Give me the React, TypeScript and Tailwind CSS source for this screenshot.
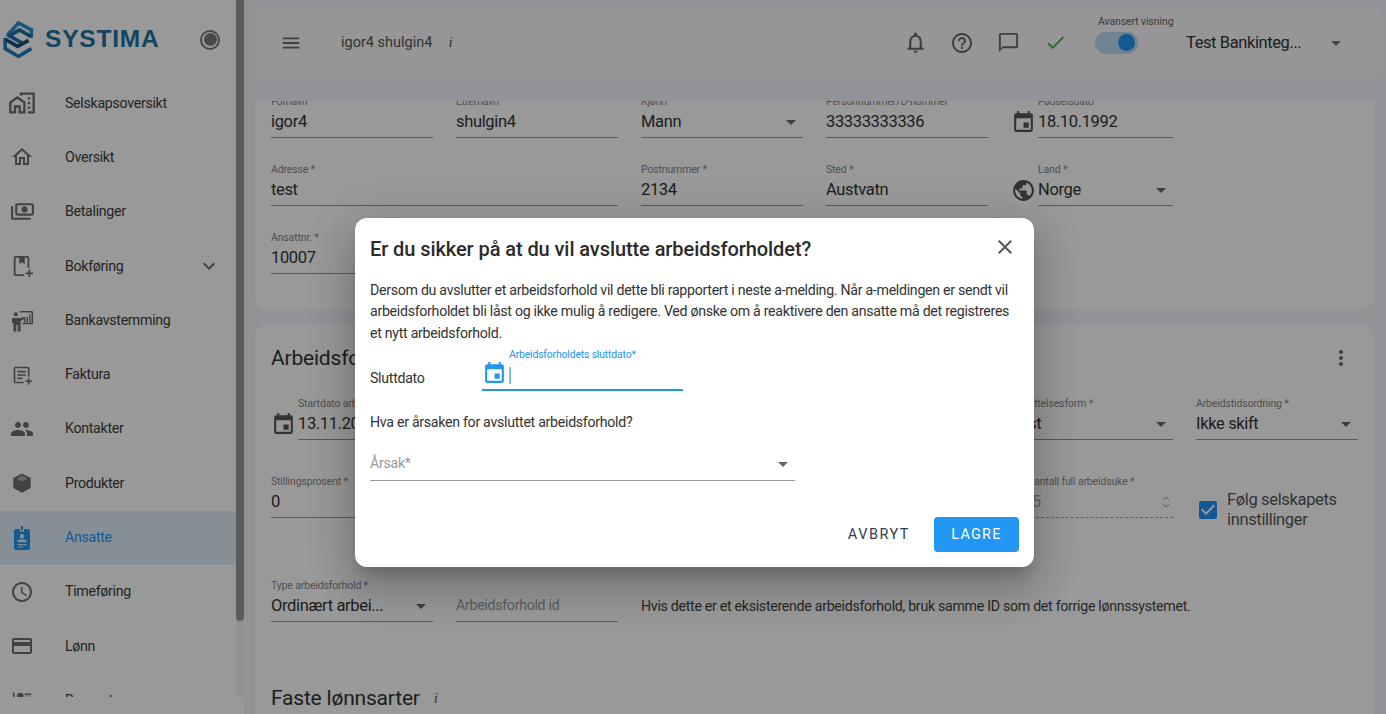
import React from 'react';
import {
  MdOutlineMapsHomeWork,
  MdOutlineHome,
  MdOutlinePayments,
  MdPeople,
  MdOutlineAccessTime,
  MdOutlineCreditCard,
  MdKeyboardArrowDown,
  MdMenu,
  MdOutlineNotifications,
  MdHelpOutline,
  MdChatBubbleOutline,
  MdCheck,
  MdArrowDropDown,
  MdClose,
  MdMoreVert,
  MdCheckBox,
  MdPublic,
} from 'react-icons/md';

const CalendarIcon = ({ className }: { className?: string }) => (
  <svg viewBox="0 0 24 24" fill="currentColor" className={className}>
    <path d="M17 12h-5v5h5v-5zM16 1v2H8V1H6v2H5c-1.11 0-1.99.9-1.99 2L3 19c0 1.1.89 2 2 2h14c1.1 0 2-.9 2-2V5c0-1.1-.9-2-2-2h-1V1h-2zm3 18H5V8h14v11z" />
  </svg>
);

const BookIcon = ({ className }: { className?: string }) => (
  <svg viewBox="0 0 24 24" fill="currentColor" className={className}>
    <path d="M5 1h13a2 2 0 0 1 2 2v11h-2V3h-3v7l-3-2-3 2V3H5v18h9v2H5a2 2 0 0 1-2-2V3a2 2 0 0 1 2-2z" />
    <path d="M19 16h2v3h3v2h-3v3h-2v-3h-3v-2h3z" />
  </svg>
);

const PresenterIcon = ({ className }: { className?: string }) => (
  <svg viewBox="0 0 24 24" fill="currentColor" className={className}>
    <circle cx="5" cy="5.5" r="2.2" />
    <path d="M1 9.5h9l5-1.5v2l-5 2.5v11H7v-7H5.6v7H2.6v-9H1z" />
    <path d="M9 2h12.5A1.5 1.5 0 0 1 23 3.5v11a1.5 1.5 0 0 1-1.5 1.5H12v-1.6h9.4V3.6H9z" />
    <path d="M13.5 10.5H15V14h-1.5zM16.2 8H17.7v6h-1.5zM18.9 5.5h1.4V14h-1.4z" />
  </svg>
);

const InvoiceIcon = ({ className }: { className?: string }) => (
  <svg viewBox="0 0 24 24" fill="currentColor" className={className}>
    <path d="M4 2h15a2 2 0 0 1 2 2v10h-2V4H4v16h10v2H4a2 2 0 0 1-2-2V4a2 2 0 0 1 2-2z" />
    <path d="M6.5 7h10v2h-10zM6.5 11h10v2h-10zM6.5 15h6v2h-6z" />
    <path d="M19 15.5h2v3h3v2h-3v3h-2v-3h-3v-2h3z" />
  </svg>
);

const BoxIcon = ({ className }: { className?: string }) => (
  <svg viewBox="0 0 24 24" fill="currentColor" className={className}>
    <path d="M12 1.5 21.5 6.5v11L12 22.5 2.5 17.5v-11L12 1.5z" />
    <path d="M12 3.9 5.8 7.1 12 10.3l6.2-3.2z" fill="#a8a8a8" />
  </svg>
);

const BadgeIcon = ({ className }: { className?: string }) => (
  <svg viewBox="0 0 24 24" fill="currentColor" className={className}>
    <path d="M11 0h2v4h-2z" />
    <path
      fillRule="evenodd"
      d="M6 3h4v2.5h4V3h4a2 2 0 0 1 2 2v17a2 2 0 0 1-2 2H6a2 2 0 0 1-2-2V5a2 2 0 0 1 2-2zm6 5a2.2 2.2 0 1 0 0 4.4A2.2 2.2 0 0 0 12 8zM7.5 15v1.2h9V15c0-1-2.2-1.8-4.5-1.8S7.5 14 7.5 15zm0 3v1.2h9V18h-9zm0 2.4v1.2h5.5v-1.2H7.5z"
    />
  </svg>
);

const ReportIcon = ({ className }: { className?: string }) => (
  <svg viewBox="0 0 24 24" fill="currentColor" className={className}>
    <path d="M1 2h2v20H1z" />
    <circle cx="10" cy="6" r="4" />
    <path d="M15 3h8v2h-8zM15 7h8v2h-8z" />
    <path d="M4 16c0-3 3-5 6-5s6 2 6 5v5H4z" />
  </svg>
);

const LogoMark = () => (
  <svg viewBox="0 0 36 42" className="w-[33px] h-[39px] shrink-0" fill="none" strokeLinejoin="miter">
    <path d="M6 16 L18 3 L32 10.5 V19" stroke="#2a8fd0" strokeWidth="4" />
    <path d="M32 18 L19 10.5 L8 17 L22 25" stroke="#1d6fa8" strokeWidth="4" />
    <path d="M3.5 19 V31 L18 39.5 L32 31" stroke="#1e7fbe" strokeWidth="4" />
    <path d="M4 21 L17 28.5 L29 22" stroke="#174f7c" strokeWidth="4" />
  </svg>
);

const navItems = [
  { label: 'Selskapsoversikt', icon: <MdOutlineMapsHomeWork className="w-[28px] h-[28px]" /> },
  { label: 'Oversikt', icon: <MdOutlineHome className="w-[24px] h-[24px]" /> },
  { label: 'Betalinger', icon: <MdOutlinePayments className="w-[25px] h-[25px] -scale-x-100" /> },
  { label: 'Bokføring', icon: <BookIcon className="w-[22px] h-[22px]" />, chevron: true },
  { label: 'Bankavstemming', icon: <PresenterIcon className="w-[23px] h-[23px]" /> },
  { label: 'Faktura', icon: <InvoiceIcon className="w-[20px] h-[20px]" /> },
  { label: 'Kontakter', icon: <MdPeople className="w-[24px] h-[24px]" /> },
  { label: 'Produkter', icon: <BoxIcon className="w-[22px] h-[22px]" /> },
  { label: 'Ansatte', icon: <BadgeIcon className="w-[24px] h-[24px]" />, active: true },
  { label: 'Timeføring', icon: <MdOutlineAccessTime className="w-[24px] h-[24px]" /> },
  { label: 'Lønn', icon: <MdOutlineCreditCard className="w-[24px] h-[24px]" /> },
  { label: 'Rapporter', icon: <ReportIcon className="w-[20px] h-[20px]" /> },
];

type FieldProps = {
  label?: string;
  value?: string;
  placeholder?: string;
  select?: boolean;
  icon?: React.ReactNode;
  dashed?: boolean;
  className?: string;
};

const Field = ({ label, value, placeholder, select, icon, dashed, className }: FieldProps) => (
  <div className={`flex items-end gap-[2px] h-[44px] ${className ?? ''}`}>
    {icon && <div className="mb-[3px] text-[#555]">{icon}</div>}
    <div className={`relative flex-1 min-w-0 h-full flex flex-col border-b ${dashed ? 'border-dashed border-gray-400' : 'border-[#949494]'}`}>
      <div className="pt-[1px] text-[10.5px] tracking-[-0.15px] leading-[14px] text-[#858585] whitespace-nowrap h-[15px]">{label}</div>
      <div className="flex items-center justify-between flex-1 pb-[2px]">
        {placeholder ? (
          <span className="text-[14.2px] tracking-[-0.3px] whitespace-nowrap text-[#9a9a9a]">{placeholder}</span>
        ) : (
          <span className={`text-[16.5px] tracking-[-0.35px] whitespace-nowrap ${dashed ? 'text-[#aaa]' : 'text-[#333]'}`}>{value}</span>
        )}
        {select && <MdArrowDropDown className="w-[24px] h-[24px] text-[#6a6a6a]" />}
        {dashed && (
          <svg viewBox="0 0 10 16" className="w-[10px] h-[16px] mr-[2px] text-[#999]" fill="none" stroke="currentColor" strokeWidth="1">
            <path d="M2 6l3-3 3 3M2 10l3 3 3-3" />
          </svg>
        )}
      </div>
    </div>
  </div>
);

export default function App() {
  return (
    <div className="relative h-[714px] w-[1386px] overflow-hidden flex bg-[#f3f5fa] text-[#333] font-['Roboto',sans-serif]">
      {/* sidebar */}
      <aside className="w-[244px] shrink-0 h-full bg-white flex flex-col relative">
        <div className="h-[76px] shrink-0 flex items-center pl-[2px] pt-[3px] w-[236px]">
          <LogoMark />
          <span className="ml-[10px] text-[24.5px] font-bold tracking-[0.8px] text-[#22739f] font-['Liberation_Sans',sans-serif]">SYSTIMA</span>
          <span className="ml-auto mr-[16px] w-[20px] h-[20px] rounded-full border-2 border-[#7a7a7a] flex items-center justify-center">
            <span className="w-[13px] h-[13px] rounded-full bg-[#7a7a7a]" />
          </span>
        </div>
        <nav className="w-[236px] h-[621px] overflow-hidden">
          {navItems.map((item) => (
            <div
              key={item.label}
              className={`h-[54.33px] shrink-0 flex items-center ${item.active ? 'bg-[#dfeefb] text-[#2196f3]' : 'text-[#3c3c3c]'}`}
            >
              <span className={`w-[44px] h-full flex items-center justify-center ${item.active ? 'text-[#2196f3]' : 'text-[#6f6f6f]'}`}>
                {item.icon}
              </span>
              <span className="ml-[21px] text-[14.2px] tracking-[-0.3px]">{item.label}</span>
              {item.chevron && <MdKeyboardArrowDown className="ml-auto mr-[15px] w-[24px] h-[24px] text-[#6f6f6f]" />}
            </div>
          ))}
        </nav>
        {/* scrollbar */}
        <div className="absolute right-0 top-0 w-[8px] h-[697px] rounded-b-full bg-[#f0f0f0]">
          <div className="h-[621px] rounded-b-full bg-[#9a9a9a]" />
        </div>
      </aside>

      {/* main */}
      <main className="flex-1 min-w-0 h-full flex flex-col overflow-hidden pl-[11px] pr-[4px]">
        <header className="mt-[6px] h-[73px] shrink-0 rounded-xl bg-[#fafbfc] flex items-center pl-[25px] pr-[34px]">
          <MdMenu className="w-[22px] h-[22px] text-[#6a6a6a]" />
          <span className="ml-[39px] text-[14.5px] text-[#555]">igor4 shulgin4</span>
          <span className="ml-[16px] text-[15px] italic font-['Liberation_Serif',serif] text-[#555]">i</span>
          <div className="ml-auto flex items-center">
            <MdOutlineNotifications className="w-[25px] h-[25px] text-[#6a6a6a]" />
            <MdHelpOutline className="ml-[22px] w-[24px] h-[24px] text-[#6a6a6a]" />
            <MdChatBubbleOutline className="ml-[23px] w-[23px] h-[23px] text-[#6a6a6a]" />
            <MdCheck className="ml-[24px] w-[23px] h-[23px] text-[#4caf50]" />
            <div className="ml-[28px] relative w-[43px] h-[22px] rounded-full bg-[#bcd9f2] flex items-center justify-end pr-[3px]">
              <span className="w-[17px] h-[17px] rounded-full bg-[#2196f3]" />
              <span className="absolute -top-[17px] left-[3px] text-[10.5px] tracking-[-0.1px] leading-[14px] whitespace-nowrap text-[#666]">Avansert visning</span>
            </div>
            <span className="ml-[48px] pt-[1px] text-[16.5px] tracking-[-0.4px] text-[#333] w-[138px] whitespace-nowrap">Test Bankinteg...</span>
            <MdArrowDropDown className="w-[24px] h-[24px] text-[#777]" />
          </div>
        </header>

        <div className="mt-[22px] mr-[8px] flex-1 min-h-0 overflow-hidden flex flex-col gap-[16px]">
          {/* person card */}
          <section className="h-[208px] shrink-0 bg-white rounded-b-xl overflow-hidden pl-[16px]">
            <div className="-mt-[7px] grid grid-cols-[repeat(6,162px)] gap-x-[23px] gap-y-[24px]">
              <Field label="Fornavn" value="igor4" />
              <Field label="Etternavn" value="shulgin4" />
              <Field label="Kjønn" value="Mann" select />
              <Field label="Personnummer/D-nummer" value="33333333336" />
              <Field label="Fødselsdato" value="18.10.1992" icon={<CalendarIcon className="w-[25px] h-[25px]" />} />
              <div />
              <Field label="Adresse *" value="test" className="col-span-2" />
              <Field label="Postnummer *" value="2134" />
              <Field label="Sted *" value="Austvatn" />
              <Field label="Land *" value="Norge" select icon={<MdPublic className="w-[25px] h-[25px]" />} />
              <div />
              <Field label="Ansattnr. *" value="10007" />
            </div>
          </section>

          {/* employment card */}
          <section className="flex-1 bg-white rounded-t-xl pl-[16px] relative">
            <h2 className="mt-[19px] text-[21px] tracking-[-0.2px] font-normal leading-[28px] text-[#333]">Arbeidsforhold</h2>
            <MdMoreVert className="absolute right-[21px] top-[21px] w-[24px] h-[24px] text-[#6a6a6a]" />
            <div className="mt-[24px] grid grid-cols-[repeat(6,162px)] gap-x-[23px] gap-y-[34px]">
              <Field label="Startdato arbeidsforhold *" value="13.11.2020" icon={<CalendarIcon className="w-[25px] h-[25px]" />} />
              <Field label="Sluttdato" value="" />
              <Field label="Yrke *" value="Test" />
              <Field label="Virksomhet *" value="Test" />
              <Field label="Ansettelsesform *" value="Fast" select />
              <Field label="Arbeidstidsordning *" value="Ikke skift" select />
              <Field label="Stillingsprosent *" value="0" />
              <Field label="Lønn *" value="0" />
              <Field label="Lønnstype *" value="Fast" />
              <Field label="Timer per uke *" value="0" />
              <Field label="Snitt antall full arbeidsuke *" value="37,5" dashed />
              <div className="flex items-center gap-[7px] text-[16.5px] tracking-[-0.35px] leading-[20px] text-[#555] h-[40px] mt-[16px]">
                <MdCheckBox className="w-[24px] h-[24px] shrink-0 text-[#2196f3]" />
                <span>Følg selskapets innstillinger</span>
              </div>
              <Field label="Type arbeidsforhold *" value="Ordinært arbei..." select className="mt-[14px]" />
              <Field placeholder="Arbeidsforhold id" className="mt-[14px]" />
              <div className="mt-[14px] col-span-4 text-[14.2px] tracking-[-0.3px] text-[#444] self-center pt-[14px] whitespace-nowrap">
                Hvis dette er et eksisterende arbeidsforhold, bruk samme ID som det forrige lønnssystemet.
              </div>
            </div>
            <h2 className="mt-[62px] text-[21px] tracking-[-0.2px] font-normal leading-[28px] text-[#333] flex items-center gap-[14px]">
              Faste lønnsarter
              <span className="text-[15px] italic font-['Liberation_Serif',serif] text-[#555]">i</span>
            </h2>
          </section>
        </div>
      </main>

      {/* backdrop */}
      <div className="absolute inset-0 bg-black/40" />

      {/* dialog */}
      <div className="absolute left-[355px] top-[218px] w-[679px] h-[349px] bg-white rounded-xl shadow-[0_11px_15px_-7px_rgba(0,0,0,0.2),0_24px_38px_3px_rgba(0,0,0,0.14),0_9px_46px_8px_rgba(0,0,0,0.12)] flex flex-col px-[15px] text-[#333]">
        <div className="flex items-center justify-between h-[62px] shrink-0">
          <h1 className="text-[20px] tracking-[-0.08px] font-medium text-[#2b2b2b] whitespace-nowrap">Er du sikker på at du vil avslutte arbeidsforholdet?</h1>
          <MdClose className="w-[24px] h-[24px] text-[#555] mr-[2px] -mt-[4px]" />
        </div>
        <p className="text-[14.2px] tracking-[-0.3px] leading-[21.33px] text-[#333]">
          Dersom du avslutter et arbeidsforhold vil dette bli rapportert i neste a-melding. Når a-meldingen er sendt vil arbeidsforholdet bli låst og ikke mulig å redigere. Ved ønske om å reaktivere den ansatte må det registreres et nytt arbeidsforhold.
        </p>
        <div className="flex mt-[3px] h-[44px] shrink-0">
          <span className="w-[112px] text-[14.2px] tracking-[-0.3px] self-end mb-[2px]">Sluttdato</span>
          <div className="w-[201px] h-full border-b-2 border-[#2196f3] flex items-end relative">
            <CalendarIcon className="w-[25px] h-[25px] text-[#2196f3] mb-[3px]" />
            <span className="ml-[2px] mb-[5px] w-[2px] h-[17px] bg-[#7cc0f7]" />
            <span className="absolute left-[27px] top-[1px] text-[10.5px] tracking-[-0.2px] leading-[14px] text-[#2196f3] whitespace-nowrap">Arbeidsforholdets sluttdato*</span>
          </div>
        </div>
        <p className="mt-[21px] text-[14.2px] tracking-[-0.3px] leading-[20px]">Hva er årsaken for avsluttet arbeidsforhold?</p>
        <div className="mt-[13px] w-[425px] h-[36px] shrink-0 border-b border-[#9a9a9a] flex items-center pt-[3px]">
          <span className="text-[14.2px] tracking-[-0.3px] text-[#9a9a9a]">Årsak*</span>
          <MdArrowDropDown className="ml-auto w-[24px] h-[24px] text-[#666]" />
        </div>
        <div className="mt-auto mb-[15px] flex justify-end items-center">
          <span className="mr-[24px] text-[14.5px] tracking-[1.5px] text-[#2f3e52]">AVBRYT</span>
          <button className="w-[85px] h-[35px] rounded bg-[#2196f3] text-white text-[14.5px] tracking-[1.2px]">LAGRE</button>
        </div>
      </div>
    </div>
  );
}
